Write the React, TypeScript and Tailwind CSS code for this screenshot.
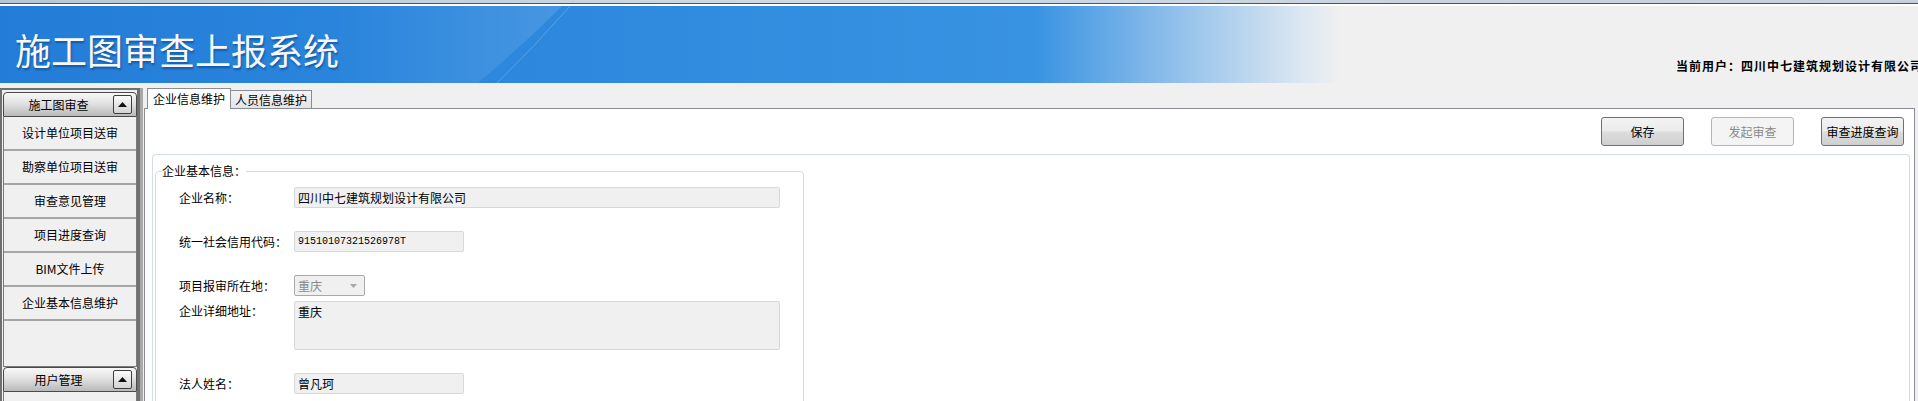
const navItems = [
  "设计单位项目送审",
  "勘察单位项目送审",
  "审查意见管理",
  "项目进度查询",
  "BIM文件上传",
  "企业基本信息维护",
];

const ToggleBtn = () => (
  <span className="flex h-[19px] w-[19px] items-center justify-center rounded-[2px] border border-[#3c3c3c] bg-[linear-gradient(#fbfbfb,#d4d4d4)]">
    <svg width="9" height="5" viewBox="0 0 9 5">
      <path d="M0 5 L4.5 0 L9 5 Z" fill="#111" />
    </svg>
  </span>
);

const PanelHeader = ({ title }: { title: string }) => (
  <div className="flex h-[25px] shrink-0 items-center rounded-t-[4px] border border-[#4a4a4a] bg-[linear-gradient(#f8f8f8,#e2e2e2_45%,#b9b9b9)] pr-[4px]">
    <span className="flex-1 text-center">{title}</span>
    <ToggleBtn />
  </div>
);

const Btn = ({ label, disabled }: { label: string; disabled?: boolean }) => (
  <button
    className={
      disabled
        ? "h-[29px] w-[83px] rounded-[3px] border border-[#b2b6ba] bg-[#f4f4f4] text-[#8a8a8a]"
        : "h-[29px] w-[83px] rounded-[3px] border border-[#707070] bg-[linear-gradient(#f3f3f3,#ebebeb_48%,#dddddd_52%,#cfcfcf)] text-black"
    }
  >
    {label}
  </button>
);

const Field = ({ label, children }: { label: string; children: React.ReactNode }) => (
  <div className="flex items-center">
    <span className="w-[115px] shrink-0">{label}</span>
    {children}
  </div>
);

const boxCls =
  "h-[21px] rounded-[2px] border border-[#d5d9de] bg-[#f0f0f0] px-[3px] outline-none";

export default function App() {
  return (
    <div className="h-[401px] w-[1918px] overflow-hidden bg-[#f0f0f0] font-['Noto_Sans_CJK_SC',sans-serif] text-[12px] text-black">
      {/* header */}
      <div className="h-[3px] bg-[linear-gradient(90deg,#b8c6d8,#cfd9e6_40%,#c4d0de)]" />
      <div className="h-px bg-[#4b5664]" />
      <div className="h-[2px] bg-white" />
      <div className="relative h-[77px] overflow-hidden bg-[linear-gradient(90deg,#237dd8_0%,#2e89de_30%,#3993e2_54%,#9fc7ec_62.5%,#dde8f2_68%,#f0f0f0_70%)]">
        <svg className="absolute inset-0" width="1918" height="77">
          <defs>
            <linearGradient id="glow" x1="0" x2="1" y1="0" y2="0">
              <stop offset="0" stopColor="#ffffff" stopOpacity="0" />
              <stop offset="1" stopColor="#ffffff" stopOpacity="0.12" />
            </linearGradient>
          </defs>
          <path d="M330 0 L562 0 Q520 42 478 77 L330 77 Z" fill="url(#glow)" />
          <path d="M497 77 Q535 40 570 0" stroke="#ffffff" strokeOpacity="0.22" strokeWidth="1" fill="none" />
        </svg>
        <h1 className="relative pl-[15px] pt-[25px] text-[36px] leading-none font-normal text-[#f6f8fb] [text-shadow:1px_2px_2px_rgba(0,40,90,0.45)]">
          施工图审查上报系统
        </h1>
        <span className="absolute left-[1676px] top-[51px] whitespace-nowrap font-bold tracking-[1px]">
          当前用户：四川中七建筑规划设计有限公司
        </span>
      </div>

      <div className="flex h-[318px]">
        {/* sidebar */}
        <aside className="mt-[5px] flex w-[140px] shrink-0 flex-col border-l-2 border-r-[3px] border-t-2 border-[#707070] pl-px pt-[2px]">
          <PanelHeader title="施工图审查" />
          <div className="flex h-[250px] shrink-0 flex-col border-x border-b border-[#7a7a7a] bg-[#f0f0f0]">
            {navItems.map((item) => (
              <div
                key={item}
                className="flex h-[34px] shrink-0 items-center justify-center border-b-2 border-[#a6a6a6]"
              >
                {item}
              </div>
            ))}
          </div>
          <PanelHeader title="用户管理" />
          <div className="flex-1 border-x border-[#7a7a7a] bg-[#f0f0f0]" />
        </aside>
        <div className="mt-[5px] w-[3px] shrink-0 bg-[#a9a9a9]" />

        {/* main */}
        <main className="flex min-w-0 flex-1 flex-col pl-px pr-[3px] pt-[5px]">
          <div className="flex h-[20px] items-end pl-[3px]">
            <div className="relative z-10 -mb-px h-[21px] border border-b-0 border-[#898c95] bg-white px-[5px] leading-[19px]">
              企业信息维护
            </div>
            <div className="h-[18px] border border-b-0 border-l-0 border-[#898c95] bg-[linear-gradient(#f4f4f4,#e4e4e4)] px-[4px] leading-[17px]">
              人员信息维护
            </div>
          </div>
          <div className="flex flex-1 flex-col border border-b-0 border-[#898c95] bg-white">
            <div className="flex justify-end gap-[27px] pr-[10px] pt-[8px]">
              <Btn label="保存" />
              <Btn label="发起审查" disabled />
              <Btn label="审查进度查询" />
            </div>
            <div className="ml-[7px] mr-[4px] mt-[8px] flex-1 rounded-t-[4px] border border-b-0 border-[#d3dde5] pl-[2px] pt-[8px]">
              <fieldset className="h-[300px] w-[649px] rounded-[4px] border border-[#d3dde5] pl-[6px]">
                <legend className="leading-[16px]">企业基本信息：</legend>
                <div className="ml-[17px] mt-[8px] flex flex-col">
                  <Field label="企业名称：">
                    <input readOnly value="四川中七建筑规划设计有限公司" className={boxCls + " w-[486px] text-[12px]"} />
                  </Field>
                  <div className="mt-[23px]">
                    <Field label="统一社会信用代码：">
                      <input
                        readOnly
                        value="91510107321526978T"
                        className={boxCls + " w-[170px] font-['Liberation_Mono',monospace] text-[10px]"}
                      />
                    </Field>
                  </div>
                  <div className="mt-[23px]">
                    <Field label="项目报审所在地：">
                      <div className="flex h-[21px] w-[71px] items-center justify-between rounded-[2px] border border-[#a9a9a9] bg-[#f0f0f0] pl-[3px] pr-[7px] text-[#8a8a8a]">
                        <span>重庆</span>
                        <svg width="7" height="4" viewBox="0 0 7 4">
                          <path d="M0 0 L7 0 L3.5 4 Z" fill="#a8a8a8" />
                        </svg>
                      </div>
                    </Field>
                  </div>
                  <div className="mt-[5px] flex items-start">
                    <span className="w-[115px] shrink-0 pt-px">企业详细地址：</span>
                    <textarea
                      readOnly
                      value="重庆"
                      className="h-[49px] w-[486px] resize-none rounded-[2px] border border-[#d5d9de] bg-[#f0f0f0] px-[3px] py-px text-[12px] outline-none"
                    />
                  </div>
                  <div className="mt-[23px]">
                    <Field label="法人姓名：">
                      <input readOnly value="曾凡珂" className={boxCls + " w-[170px] text-[12px]"} />
                    </Field>
                  </div>
                </div>
              </fieldset>
            </div>
          </div>
        </main>
      </div>
    </div>
  );
}
